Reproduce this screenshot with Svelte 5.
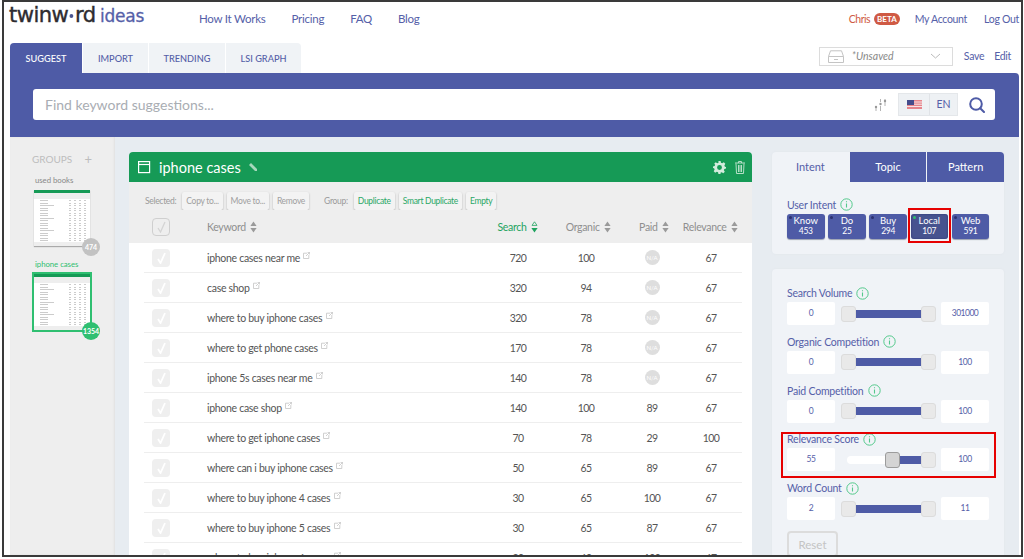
<script>
	const nav = ['How It Works', 'Pricing', 'FAQ', 'Blog'];
	const tabs = ['SUGGEST', 'IMPORT', 'TRENDING', 'LSI GRAPH'];
	const rows = [
		['iphone cases near me', 720, 100, null, 67],
		['case shop', 320, 94, null, 67],
		['where to buy iphone cases', 320, 78, null, 67],
		['where to get phone cases', 170, 78, null, 67],
		['iphone 5s cases near me', 140, 78, null, 67],
		['iphone case shop', 140, 100, 89, 67],
		['where to get iphone cases', 70, 78, 29, 100],
		['where can i buy iphone cases', 50, 65, 89, 67],
		['where to buy iphone 4 cases', 30, 65, 100, 67],
		['where to buy iphone 5 cases', 30, 65, 87, 67],
		['where to buy iphone 6s case', 30, 60, 100, 67]
	];
	const intents = [
		['Know', 453],
		['Do', 25],
		['Buy', 294],
		['Local', 107],
		['Web', 591]
	];
	const filters = [
		{ name: 'Search Volume', min: 0, max: 301000, off: 0 },
		{ name: 'Organic Competition', min: 0, max: 100, off: 0 },
		{ name: 'Paid Competition', min: 0, max: 100, off: 0 },
		{ name: 'Relevance Score', min: 55, max: 100, off: 44, marked: true },
		{ name: 'Word Count', min: 2, max: 11, off: 0 }
	];
	const thumbRows = Array.from({ length: 17 }, (_, i) => i);
</script>

{#snippet sortArrows(on)}
	<svg class="sort" class:on width="7" height="12" viewBox="0 0 7 12">
		{#if on}
			<path d="M3.5 .8 6 4.4H1z" fill="none" stroke="currentColor" stroke-width=".8" />
		{:else}
			<path d="M3.5 .5 6.6 5H.4z" fill="currentColor" />
		{/if}
		<path d="M3.5 11.5.4 7h6.2z" fill="currentColor" />
	</svg>
{/snippet}

{#snippet info()}
	<svg class="info" width="13" height="13" viewBox="0 0 13 13">
		<circle cx="6.5" cy="6.5" r="5.7" fill="none" stroke="currentColor" />
		<path d="M6.5 5.5v4M6.5 3.2v1.1" stroke="currentColor" stroke-width="1.1" fill="none" />
	</svg>
{/snippet}

{#snippet thumb(active, count)}
	<div class="thumb" class:active>
		<div class="thumb-head"></div>
		<div class="thumb-gap"></div>
		<div class="thumb-body">
			{#each thumbRows as i}
				<div class="thumb-row">
					<i class="tk" class:long={i % 5 === 2}></i><i></i><i></i><i></i><i></i>
				</div>
			{/each}
		</div>
		<div class="thumb-foot"></div>
		<span class="count">{count}</span>
	</div>
{/snippet}

<div class="frame">
	<header class="top">
		<div class="logo">
			<span class="twin">twinw<b></b>rd</span>
			<span class="ideas">ideas</span>
		</div>
		<nav class="nav">
			{#each nav as item}
				<a href="#top">{item}</a>
			{/each}
		</nav>
		<div class="user">
			<span class="name">Chris</span>
			<span class="beta">BETA</span>
			<a href="#top" class="acct">My Account</a>
			<a href="#top">Log Out</a>
		</div>
	</header>

	<div class="tabbar">
		<div class="tabs">
			{#each tabs as tab, i}
				<button class="tab" class:current={i === 0}>{tab}</button>
			{/each}
		</div>
		<div class="saved">
			<div class="select">
				<svg width="16" height="13" viewBox="0 0 16 13" fill="none" stroke="#c4c4c4">
					<path d="M.5 6.500 2.500.8h11l2 5.700v6H.5z M.5 6.500h15 M6 9.500h4" />
				</svg>
				<span class="unsaved">*Unsaved</span>
				<svg class="chev" width="11" height="6" viewBox="0 0 11 6" fill="none" stroke="#bbb">
					<path d="m1 1 4.500 4L10 1" />
				</svg>
			</div>
			<a href="#top">Save</a>
			<a href="#top">Edit</a>
		</div>
	</div>

	<div class="searchbar">
		<div class="search">
			<span class="placeholder">Find keyword suggestions...</span>
			<svg class="tune" width="13" height="12" viewBox="0 0 13 12" fill="none" stroke="#b4b4b4">
				<path d="M2 7v5M6.500 0v3M6.500 7v5M11 0v7" />
				<circle cx="2" cy="8" r="1.200" fill="#999" stroke="none" />
				<circle cx="6.500" cy="5" r="1.200" fill="#999" stroke="none" />
				<circle cx="11" cy="2" r="1.200" fill="#999" stroke="none" />
			</svg>
			<div class="lang">
				<span class="flag">
					<svg width="15" height="9" viewBox="0 0 15 9">
						<rect width="15" height="9" fill="#e6848c" />
						<path d="M0 2h15M0 4.200h15M0 6.500h15" stroke="#f6e3e4" />
						<rect width="7" height="5" fill="#454c8c" />
					</svg>
				</span>
				<span class="en">EN</span>
			</div>
			<svg class="glass" width="16" height="16" viewBox="0 0 16 16" fill="none" stroke="#4e5ba6" stroke-width="2">
				<circle cx="7" cy="7" r="5.800" />
				<path d="m11.200 11.200 3.800 3.800" stroke-linecap="round" />
			</svg>
		</div>
	</div>

	<div class="content">
		<aside class="groups">
			<div class="groups-title"><span>GROUPS</span><span class="plus">+</span></div>
			<div class="group-name">used books</div>
			{@render thumb(false, 474)}
			<div class="group-name green">iphone cases</div>
			{@render thumb(true, 1354)}
		</aside>

		<main class="main">
			<section class="panel">
				<div class="panel-head">
					<svg width="13" height="13" viewBox="0 0 13 13" fill="none" stroke="#fff" stroke-width="1.200">
						<rect x=".6" y=".6" width="11" height="11" />
						<path d="M.6 3.500h11" />
					</svg>
					<h1>iphone cases</h1>
					<svg class="pencil" width="8" height="8" viewBox="0 0 8 8">
						<path d="M2 0 8 6v2H6L0 2z" fill="#a6d8bc" />
					</svg>
					<svg class="gear" width="13" height="13" viewBox="0 0 24 24">
						<path fill="#d3ecdd" fill-rule="evenodd" d="M10 0h4l.7 3.300 2.300 1 2.900-1.800 2.800 2.800L21 8.200l1 2.300 2 .5v3l-3 .7-1 2.300 1.800 2.900-2.800 2.800-2.900-1.800-2.300 1L14 24h-4l-.7-3.300-2.300-1-2.900 1.800-2.800-2.800L3 15.800l-1-2.300L0 13v-3l3-.7 1-2.300L2.200 5.100 5 2.300l2.900 1.800 2.300-1zM12 7.500a4.500 4.500 0 1 0 0 9 4.500 4.500 0 0 0 0-9z" />
					</svg>
					<svg class="trash" width="10" height="13" viewBox="0 0 10 13" fill="none" stroke="#b5dfc7">
						<path d="M0 2h10M3.500 2V.5h3V2M1 2.500l.5 10h7l.5-10M3.500 4v7M5 4v7M6.500 4v7" />
					</svg>
				</div>

				<div class="toolbar">
					<span class="tl-label">Selected:</span>
					<button>Copy to...</button>
					<button>Move to...</button>
					<button>Remove</button>
					<span class="tl-label second">Group:</span>
					<button class="g">Duplicate</button>
					<button class="g">Smart Duplicate</button>
					<button class="g">Empty</button>
				</div>

				<div class="row heading">
					<span class="check-col">
						<span class="box outline">
							<svg width="11" height="12" viewBox="0 0 11 12" fill="none" stroke="#d4d4d4" stroke-width="1.300">
								<path d="m2 7 2.500 4L9 1" />
							</svg>
						</span>
					</span>
					<span class="kw">Keyword {@render sortArrows(false)}</span>
					<span class="num search-h">Search {@render sortArrows(true)}</span>
					<span class="num organic-h">Organic {@render sortArrows(false)}</span>
					<span class="num paid-h">Paid {@render sortArrows(false)}</span>
					<span class="num rel-h">Relevance {@render sortArrows(false)}</span>
				</div>

				<div class="rows">
					{#each rows as [word, search, organic, paid, relevance]}
						<div class="row item">
							<span class="check-col">
								<span class="box">
									<svg width="11" height="12" viewBox="0 0 11 12" fill="none" stroke="#fff" stroke-width="1.800">
										<path d="m2 7 2.500 4L9 1" />
									</svg>
								</span>
							</span>
							<span class="kw">
								{word}
								<svg class="ext" width="7" height="7" viewBox="0 0 7 7" fill="none" stroke="#c4c4c4" stroke-width=".8">
									<path d="M4 1.200H.5v5.300h5.300V3M3 4l3.500-3.500M4.500.4h2.100v2.100" />
								</svg>
							</span>
							<span class="num digits search-c">{search}</span>
							<span class="num digits organic-c">{organic}</span>
							<span class="num digits paid-c">
								{#if paid === null}<span class="na">N/A</span>{:else}{paid}{/if}
							</span>
							<span class="num digits rel-c">{relevance}</span>
						</div>
					{/each}
				</div>
			</section>

			<div class="side">
				<section class="card intent">
					<div class="card-tabs">
						<button class="ctab current">Intent</button>
						<button class="ctab">Topic</button>
						<button class="ctab">Pattern</button>
					</div>
					<div class="intent-body">
						<div class="label">User Intent {@render info()}</div>
						<div class="intents">
							{#each intents as [name, value]}
								<button class="intent-btn" class:local={name === 'Local'}>
									<i></i>
									<span>{name}</span>
									<small>{value}</small>
								</button>
							{/each}
						</div>
					</div>
				</section>

				<section class="card filters">
					{#each filters as f}
						<div class="filter" class:marked={f.marked}>
							<div class="label">{f.name} {@render info()}</div>
							<div class="controls">
								<span class="val">{f.min}</span>
								<div class="slider" class:white={f.off > 0}>
									<span class="spacer" style="width: {f.off}px"></span>
									<span class="handle" class:moved={f.off > 0}></span>
									<span class="bar"></span>
									<span class="handle"></span>
								</div>
								<span class="val">{f.max}</span>
							</div>
						</div>
					{/each}
					<button class="reset">Reset</button>
				</section>
			</div>
		</main>
	</div>
</div>

<style>
	:global(body) {
		background: #fff;
	}
	.frame {
		box-sizing: border-box;
		width: 1021px;
		height: 557px;
		margin-left: 2px;
		border: 2px solid #3a3a3a;
		overflow: hidden;
		display: flex;
		flex-direction: column;
		font-family: 'Lato', 'Noto Sans', sans-serif;
		color: #555;
	}
	a {
		color: #5560a8;
		text-decoration: none;
	}
	button {
		font-family: inherit;
		cursor: pointer;
	}

	/* header */
	.top {
		display: flex;
		align-items: center;
		height: 33px;
		flex: none;
		padding: 0 2px 0 5px;
	}
	.logo {
		width: 190px;
		display: flex;
		align-items: baseline;
		gap: 5px;
		margin-top: -7px;
	}
	.twin {
		font: 22px/1 'DejaVu Sans', sans-serif;
		letter-spacing: -0.6px;
		color: #2e2c30;
		-webkit-text-stroke: 0.4px #2e2c30;
		transform: scaleX(0.96);
		transform-origin: left;
		width: 86px;
		white-space: nowrap;
	}
	.twin b {
		display: inline-block;
		width: 4px;
		height: 4px;
		margin: 0 1.500px 4px;
		border-radius: 50%;
		background: #4a5590;
	}
	.ideas {
		font: 17px/1 'DejaVu Sans', sans-serif;
		letter-spacing: -0.2px;
		color: #5560a8;
		-webkit-text-stroke: 0.3px #5560a8;
	}
	.nav {
		display: flex;
		gap: 26px;
		font-size: 11.500px;
		letter-spacing: -0.25px;
	}
	.user {
		margin-left: auto;
		display: flex;
		align-items: center;
		font-size: 10.500px;
		letter-spacing: -0.3px;
	}
	.name {
		color: #cf5a44;
		letter-spacing: -0.5px;
	}
	.beta {
		background: #cf5a44;
		color: #fff;
		font-size: 8px;
		font-weight: 700;
		letter-spacing: 0;
		border-radius: 7px;
		padding: 1px 3px;
		margin-left: 4px;
		margin-right: 15px;
		line-height: 10px;
	}
	.acct {
		margin-right: 17px;
	}

	/* tabs */
	.tabbar {
		flex: none;
		height: 30px;
		display: flex;
		justify-content: space-between;
		margin: 8px 3px 0 6px;
	}
	.tabs {
		display: flex;
		gap: 1px;
		height: 30px;
	}
	.tab {
		border: 0;
		border-radius: 0;
		background: #f0f3f6;
		color: #5560a8;
		font-size: 9.200px;
		font-weight: 500;
		height: 30px;
		padding: 0;
		width: 65px;
	}
	.tab:first-child {
		background: #4e5ba6;
		color: #fff;
		width: 72px;
		border-radius: 4px 0 0 0;
	}
	.tab:nth-child(3) {
		width: 76px;
	}
	.tab:nth-child(4) {
		width: 75px;
		border-radius: 0 4px 0 0;
	}
	.saved {
		display: flex;
		align-items: center;
		font-size: 10.500px;
		letter-spacing: -0.3px;
		gap: 10px;
		margin: -4px 7px 0 0;
	}
	.select {
		box-sizing: border-box;
		width: 134px;
		height: 19px;
		margin-right: 1px;
		border: 1px solid #dcdcdc;
		display: flex;
		align-items: center;
		padding: 0 11px 0 8px;
		gap: 8px;
		letter-spacing: 0;
	}
	.unsaved {
		font-style: italic;
		font-size: 10.500px;
		color: #888;
	}
	.chev {
		margin-left: auto;
	}

	/* search */
	.searchbar {
		flex: none;
		height: 64px;
		margin: 0 2px 0 6px;
		background: #4e5ba6;
		border-radius: 0 4px 0 0;
		padding: 16px 24px 0 23px;
		box-sizing: border-box;
	}
	.search {
		height: 31px;
		background: #fff;
		border-radius: 3px;
		display: flex;
		align-items: center;
		padding: 0 10px 0 12px;
	}
	.placeholder {
		font-size: 14px;
		color: #a9adb3;
		flex: 1;
	}
	.tune {
		margin-right: 11px;
	}
	.lang {
		display: flex;
		height: 23px;
		width: 60px;
		background: #eef1f4;
		border: 1px solid #e4e7ea;
		box-sizing: border-box;
		font-size: 10.500px;
		color: #5560a8;
		margin-right: 11px;
	}
	.flag {
		width: 30px;
		display: flex;
		align-items: center;
		justify-content: center;
		border-right: 1px solid #e0e3e7;
	}
	.en {
		flex: 1;
		text-align: center;
		line-height: 21px;
	}

	/* content */
	.content {
		flex: 1;
		min-height: 0;
		display: flex;
		margin: 0 2px 0 6px;
		overflow: hidden;
	}
	.groups {
		width: 105px;
		flex: none;
		box-sizing: border-box;
		background: #eee;
		box-shadow: inset -1px 0 2px #e0e0e0;
		padding: 16px 0 0 24px;
		position: relative;
	}
	.groups-title {
		display: flex;
		justify-content: space-between;
		width: 60px;
		margin-left: -2px;
		font-size: 10px;
		color: #bdbdbd;
		margin-bottom: 10px;
		line-height: 12px;
	}
	.plus {
		font-size: 13px;
	}
	.group-name {
		font-size: 7.800px;
		color: #888;
		margin: 0 0 5px 1px;
		line-height: 10px;
		letter-spacing: -0.05px;
	}
	.group-name.green {
		color: #2fbf71;
		margin-top: 13px;
		margin-bottom: 3px;
	}
	.thumb {
		position: relative;
		width: 56px;
		height: 56px;
		background: #fff;
		box-shadow: 0 1px 1px #aaa;
		display: flex;
		flex-direction: column;
	}
	.thumb.active {
		border: 2px solid #2fbf71;
		box-shadow: none;
		margin-left: -2px;
		box-sizing: content-box;
	}
	.thumb-head {
		height: 3px;
		background: #169a56;
	}
	.thumb-gap {
		height: 6px;
		background: #eee;
	}
	.thumb-body {
		flex: 1;
		padding: 1px 3px;
		display: flex;
		flex-direction: column;
		justify-content: space-between;
	}
	.thumb-foot {
		height: 4px;
		background: #eee;
	}
	.thumb-row {
		height: 1px;
		display: flex;
		gap: 3px;
		justify-content: flex-end;
		padding-right: 1px;
	}
	.thumb-row i {
		width: 2px;
		height: 1px;
		background: #ccc;
	}
	.thumb-row i.tk {
		width: 8px;
		margin-right: auto;
		margin-left: 3px;
	}
	.thumb-row i.long {
		width: 14px;
	}
	.count {
		position: absolute;
		right: -10px;
		bottom: -10px;
		width: 18px;
		height: 18px;
		border-radius: 50%;
		background: #c2c2c2;
		color: #fff;
		font-size: 7px;
		font-weight: 700;
		line-height: 18px;
		text-align: center;
	}
	.active .count {
		background: #2fbf71;
		right: -10px;
		bottom: -10px;
	}

	.main {
		flex: 1;
		min-width: 0;
		display: flex;
		gap: 20px;
		background: #e7ecf1;
		padding: 15px 15px 0 14px;
	}
	.panel {
		width: 623px;
		flex: none;
		background: #fff;
		border-radius: 4px 4px 0 0;
	}
	.panel-head {
		height: 30px;
		background: #169a56;
		border-radius: 4px 4px 0 0;
		display: flex;
		align-items: center;
		padding: 0 7px 0 9px;
		color: #fff;
	}
	h1 {
		margin: 0 8px 0 8px;
		font-size: 14.500px;
		font-weight: 400;
	}
	.gear {
		margin-left: auto;
		margin-right: 9px;
	}
	.toolbar {
		height: 28px;
		background: #eee;
		display: flex;
		align-items: flex-end;
		padding-left: 16px;
		gap: 4px;
	}
	.tl-label {
		font-size: 8.500px;
		letter-spacing: -0.3px;
		color: #9a9a9a;
		line-height: 18px;
		margin-right: 2px;
	}
	.tl-label.second {
		margin-left: 11px;
		margin-right: 2px;
	}
	.toolbar button {
		height: 18px;
		border: 0;
		border-radius: 2px;
		padding: 0 4px;
		background: #f3f3f3;
		box-shadow: 0 1px 2px #aaa;
		font-size: 8.500px;
		letter-spacing: -0.3px;
		color: #a0a0a0;
	}
	.toolbar button.g {
		color: #2aa766;
	}
	.row {
		display: flex;
		align-items: center;
		position: relative;
	}
	.heading {
		box-sizing: border-box;
		height: 33px;
		padding-top: 1px;
		background: #eee;
		font-size: 10.500px;
		letter-spacing: -0.3px;
		color: #8f8f8f;
	}
	.check-col {
		width: 78px;
		flex: none;
		padding-left: 23px;
		box-sizing: border-box;
		display: flex;
	}
	.box {
		width: 18px;
		height: 18px;
		border-radius: 4px;
		background: #efefef;
		display: flex;
		align-items: center;
		justify-content: center;
	}
	.box.outline {
		box-sizing: border-box;
		background: transparent;
		border: 1px solid #cfcfcf;
	}
	.kw {
		width: 272px;
		flex: none;
	}
	.num {
		text-align: center;
		flex: none;
	}
	.digits {
		letter-spacing: -0.6px;
	}
	.sort {
		color: #9a9a9a;
		vertical-align: -2px;
		margin-left: 2px;
	}
	.sort.on,
	.search-h {
		color: #1fa35f;
	}
	.search-h {
		width: 59px;
		text-align: right;
	}
	.organic-h {
		width: 73px;
		text-align: right;
	}
	.paid-h {
		width: 58px;
		text-align: right;
	}
	.rel-h {
		width: 69px;
		text-align: right;
	}
	.rows {
		margin: 0 10px 0 15px;
	}
	.item {
		height: 30px;
		box-sizing: border-box;
		border-bottom: 1px solid #eee;
		font-size: 10.500px;
		letter-spacing: -0.3px;
		color: #555;
	}
	.item .check-col {
		width: 63px;
		padding-left: 8px;
	}
	.ext {
		vertical-align: 3px;
		margin-left: 1px;
	}
	.search-c {
		width: 42px;
		margin-left: 18px;
	}
	.organic-c {
		width: 40px;
		margin-left: 27px;
	}
	.paid-c {
		width: 40px;
		margin-left: 26px;
		display: flex;
		justify-content: center;
	}
	.rel-c {
		width: 40px;
		margin-left: 19px;
	}
	.na {
		width: 15px;
		height: 15px;
		border-radius: 50%;
		background: #dedede;
		color: #fff;
		font-size: 6px;
		letter-spacing: 0;
		line-height: 15px;
		display: block;
	}

	/* right column */
	.side {
		flex: 1;
		min-width: 0;
		display: flex;
		flex-direction: column;
		gap: 15px;
	}
	.card {
		background: #f0f3f7;
		border-radius: 4px;
		box-shadow: 0 0 2px #dfe4e9;
	}
	.card-tabs {
		display: flex;
		height: 30px;
		gap: 1px;
	}
	.ctab {
		flex: 1;
		border: 0;
		background: #4e5ba6;
		color: #fff;
		font-size: 11px;
		padding: 0 0 2px;
	}
	.ctab:last-child {
		border-radius: 0 4px 0 0;
	}
	.ctab.current {
		background: transparent;
		color: #5560a8;
	}
	.intent-body {
		padding: 15px 15px 0;
		height: 72px;
		box-sizing: border-box;
	}
	.label {
		font-size: 10.500px;
		letter-spacing: -0.2px;
		color: #5560a8;
		line-height: 14px;
		height: 15px;
		display: flex;
		align-items: center;
		gap: 4px;
	}
	.info {
		color: #53c98b;
	}
	.intents {
		display: flex;
		gap: 3.700px;
		margin-top: 2px;
	}
	.intent-btn {
		position: relative;
		width: 37.500px;
		height: 25px;
		flex: none;
		border: 0;
		padding: 1px 0 0;
		background: #4e5ba6;
		border-radius: 3px;
		box-shadow: 0 1px 1px #9aa0b0;
		color: #fff;
		font-size: 9.500px;
		line-height: 11px;
		display: flex;
		flex-direction: column;
		align-items: center;
	}
	.intent-btn small {
		font-size: 8.500px;
		letter-spacing: -0.3px;
		line-height: 11px;
	}
	.intent-btn i {
		position: absolute;
		left: 2px;
		top: 2px;
		width: 3px;
		height: 3px;
		border-radius: 50%;
		background: #2b3170;
	}
	.intent-btn.local {
		background: #47538f;
		box-shadow: inset 0 0 2px #2b3170;
	}
	.intent-btn.local i {
		background: #2fbf71;
	}
	.intent-btn.local::after {
		content: '';
		position: absolute;
		inset: -6px -3px -4px -3px;
		border: 2px solid #e60000;
	}
	.filters {
		padding: 16.500px 15px 0;
		flex: 1;
		border-radius: 4px 4px 0 0;
	}
	.filter {
		height: 48.750px;
		position: relative;
	}
	.filter.marked::after {
		content: '';
		position: absolute;
		left: -6px;
		right: -7px;
		top: 0;
		bottom: 3px;
		border: 2px solid #e60000;
		box-sizing: border-box;
	}
	.controls {
		display: flex;
		align-items: center;
		margin-top: 1.500px;
		gap: 6px;
	}
	.val {
		box-sizing: border-box;
		width: 48px;
		height: 23px;
		background: #fff;
		border-radius: 2px;
		flex: none;
		font-size: 8.500px;
		letter-spacing: -0.5px;
		line-height: 23px;
		text-align: center;
		color: #5560a8;
	}
	.slider {
		width: 95px;
		height: 17px;
		margin-right: -1px;
		display: flex;
		align-items: center;
		position: relative;
	}
	.spacer {
		height: 8px;
		background: #fff;
		border-radius: 4px 0 0 4px;
		margin-left: 6px;
		margin-right: -6px;
		box-sizing: border-box;
	}
	.handle {
		width: 15px;
		height: 16px;
		flex: none;
		box-sizing: border-box;
		background: #e9e9e9;
		border: 1px solid #dcdcdc;
		border-radius: 3px;
		position: relative;
	}
	.handle.moved {
		background: #d4d4d4;
		border-color: #9c9c9c;
	}
	.bar {
		flex: 1;
		height: 8px;
		background: #4e5ba6;
	}
	.reset {
		display: block;
		box-sizing: border-box;
		margin-top: 2px;
		width: 51px;
		height: 26px;
		background: transparent;
		border: 2px solid #dcdcdc;
		border-radius: 4px;
		color: #c4c4c4;
		font-size: 11.500px;
		padding: 0;
	}
</style>
